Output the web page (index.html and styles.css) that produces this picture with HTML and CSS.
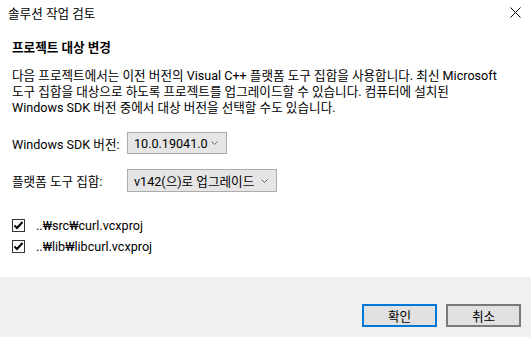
FILE: index.html
```html
<!DOCTYPE html>
<html lang="ko">
  <head>
    <meta charset="UTF-8" />
    <meta name="viewport" content="width=device-width, initial-scale=1.0" />
    <title>솔루션 작업 검토</title>
    <link rel="stylesheet" href="styles.css">
  </head>
  <body>
    <div class="dialog">
      <div class="titlebar">
        <span class="title">솔루션 작업 검토</span>
        <svg class="close" width="11" height="11" viewBox="0 0 11 11">
          <path d="M0.5 0.5 L10.5 10.5 M10.5 0.5 L0.5 10.5" stroke="#000" stroke-width="1" fill="none" />
        </svg>
      </div>
      <div class="content">
        <h1>프로젝트 대상 변경</h1>
        <p class="desc">
          다음 프로젝트에서는 이전 버전의 Visual C++ 플랫폼 도구 집합을 사용합니다. 최신 Microsoft<br>
          도구 집합을 대상으로 하도록 프로젝트를 업그레이드할 수 있습니다. 컴퓨터에 설치된<br>
          Windows SDK 버전 중에서 대상 버전을 선택할 수도 있습니다.
        </p>
        <div class="form">
          <div class="form-row">
            <label class="form-label">Windows SDK 버전:</label>
            <div class="select sdk">
              <span class="select-value">10.0.19041.0</span>
              <svg class="caret" width="7" height="4" viewBox="0 0 7 4">
                <path d="M0.5 0.5 L3.5 3.5 L6.5 0.5" stroke="#666" stroke-width="1" fill="none" />
              </svg>
            </div>
          </div>
          <div class="form-row">
            <label class="form-label">플랫폼 도구 집합:</label>
            <div class="select toolset">
              <span class="select-value">v142(으)로 업그레이드</span>
              <svg class="caret" width="7" height="4" viewBox="0 0 7 4">
                <path d="M0.5 0.5 L3.5 3.5 L6.5 0.5" stroke="#666" stroke-width="1" fill="none" />
              </svg>
            </div>
          </div>
        </div>
        <div class="projects">
          <div class="check-row">
            <span class="checkbox">
              <svg width="11" height="11" viewBox="0 0 11 11">
                <path d="M1.5 5.5 L4 8 L9.5 2" stroke="#000" stroke-width="2" fill="none" />
              </svg>
            </span>
            <span>..₩src₩curl.vcxproj</span>
          </div>
          <div class="check-row">
            <span class="checkbox">
              <svg width="11" height="11" viewBox="0 0 11 11">
                <path d="M1.5 5.5 L4 8 L9.5 2" stroke="#000" stroke-width="2" fill="none" />
              </svg>
            </span>
            <span>..₩lib₩libcurl.vcxproj</span>
          </div>
        </div>
      </div>
      <div class="footer">
        <button class="btn btn-default">확인</button>
        <button class="btn btn-cancel">취소</button>
      </div>
    </div>
  </body>
</html>
```

FILE: styles.css
```css
body {
  font-family: Roboto, "Noto Sans CJK KR", sans-serif;
  font-size: 12.6px;
  margin: 0;
  padding: 0;
  background-color: #fff;
  color: #000;
}
.dialog {
  width: 531px;
  height: 337px;
  display: flex;
  flex-direction: column;
}
.titlebar {
  height: 25px;
  display: flex;
  align-items: center;
  justify-content: space-between;
  padding: 0 10px 0 8px;
}
.content {
  flex: 1;
  padding: 0 12px;
}
h1 {
  font-size: 12.6px;
  font-weight: bold;
  margin: 15px 0 0;
  line-height: 16px;
}
.desc {
  margin: 12px 0 0;
  line-height: 16px;
  white-space: nowrap;
}
.form {
  margin-top: 16px;
  display: flex;
  flex-direction: column;
  gap: 15px;
}
.form-row {
  display: flex;
  align-items: center;
}
.form-label {
  width: 115px;
}
.select {
  height: 22px;
  box-sizing: border-box;
  border: 1px solid #acacac;
  background-color: #e5e5e5;
  display: flex;
  align-items: center;
  justify-content: space-between;
  padding: 0 8px 0 6px;
  white-space: nowrap;
}
.select.sdk {
  width: 100px;
}
.select.toolset {
  width: 150px;
  height: 23px;
}
.projects {
  margin-top: 27px;
  display: flex;
  flex-direction: column;
  gap: 8px;
}
.check-row {
  display: flex;
  align-items: center;
  height: 13px;
}
.checkbox {
  width: 13px;
  height: 13px;
  box-sizing: border-box;
  border: 1px solid #333;
  background-color: #fff;
  display: flex;
  align-items: center;
  justify-content: center;
  margin-right: 11px;
}
.footer {
  height: 60px;
  background-color: #f0f0f0;
  display: flex;
  justify-content: flex-end;
  align-items: flex-start;
  padding: 27px 10px 0 0;
  box-sizing: border-box;
  gap: 9px;
}
.btn {
  width: 75px;
  height: 23px;
  font-family: inherit;
  font-size: 12.6px;
  background-color: #e1e1e1;
  padding: 0;
  color: #000;
}
.btn-default {
  border: 2px solid #0078d7;
}
.btn-cancel {
  border: 2px solid #7a7a7a;
}
```
